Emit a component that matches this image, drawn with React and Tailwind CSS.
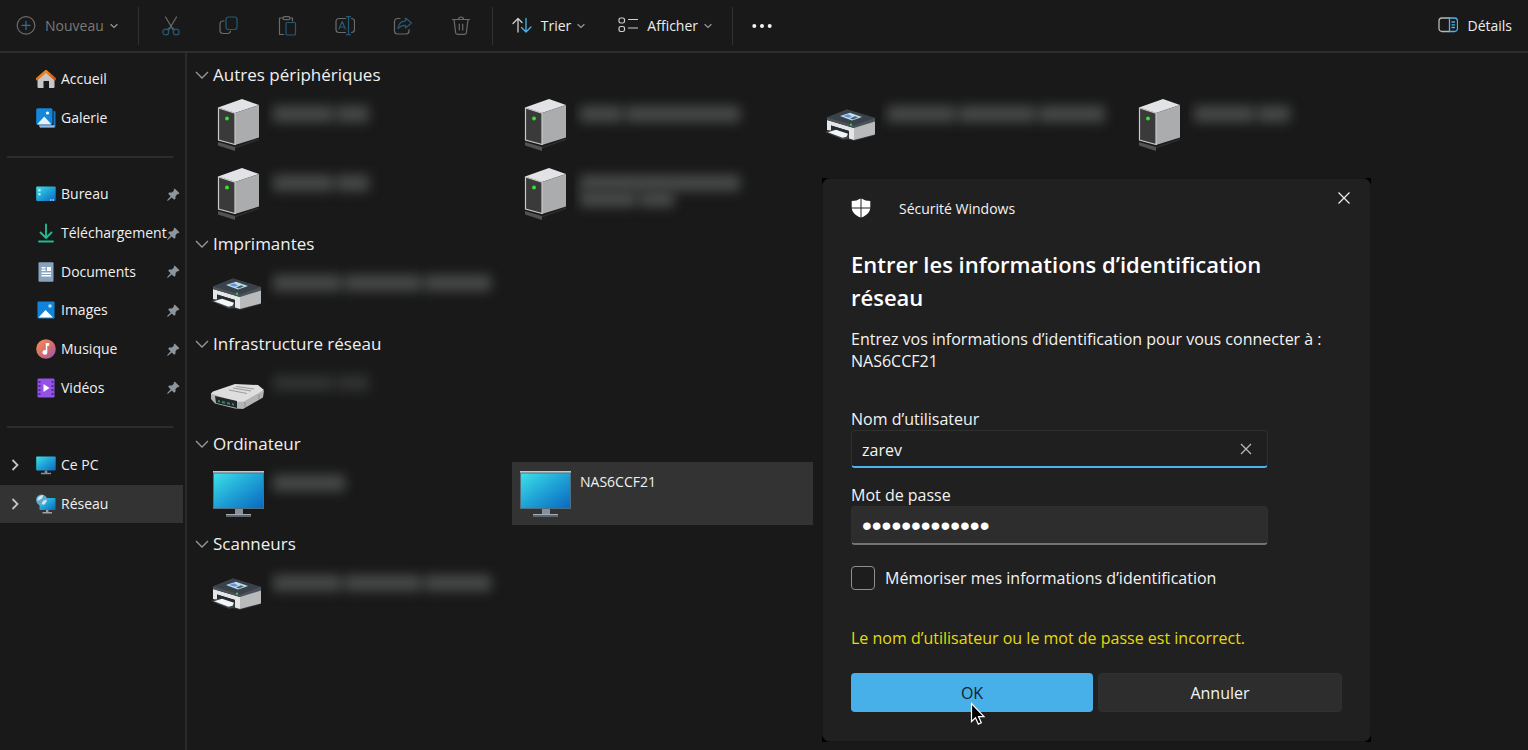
import React, { useState } from 'react';

const places = [
  { name: 'Bureau', icon: DesktopIcon },
  { name: 'Téléchargement', icon: DownloadIcon },
  { name: 'Documents', icon: DocumentIcon },
  { name: 'Images', icon: PictureIcon },
  { name: 'Musique', icon: MusicIcon },
  { name: 'Vidéos', icon: VideoIcon },
];

// Hidden names are drawn as smudges: one list of word widths per line
const groups = [
  {
    title: 'Autres périphériques',
    items: [
      { icon: ServerIcon, smudge: [[60, 32]] },
      { icon: ServerIcon, smudge: [[42, 114]] },
      { icon: PrinterIcon, smudge: [[68, 76, 66]] },
      { icon: ServerIcon, smudge: [[60, 32]] },
      { icon: ServerIcon, smudge: [[60, 32]] },
      { icon: ServerIcon, smudge: [[160], [56, 34]] },
    ],
  },
  { title: 'Imprimantes', items: [{ icon: PrinterIcon, smudge: [[68, 76, 66]] }] },
  { title: 'Infrastructure réseau', items: [{ icon: RouterIcon, smudge: [[60, 32]], faint: true }] },
  { title: 'Ordinateur', items: [{ icon: MonitorIcon, smudge: [[72]] }, { icon: MonitorIcon, name: 'NAS6CCF21', selected: true }] },
  { title: 'Scanneurs', items: [{ icon: PrinterIcon, smudge: [[68, 76, 66]] }] },
];

function Chevron({ className }) {
  return (
    <svg className={className} viewBox="0 0 14 8" fill="none" stroke="currentColor" strokeWidth="1.3">
      <path d="M1 1l6 6 6-6" />
    </svg>
  );
}

function SmallChevron() {
  return (
    <svg className="w-2 h-2 -ml-[3px] text-[#9a9a9a]" viewBox="0 0 8 8" fill="none" stroke="currentColor" strokeWidth="1.2">
      <path d="M0.6 2.2L4 5.4l3.4-3.2" />
    </svg>
  );
}

function ToolIcon({ children }) {
  return (
    <svg className="w-5 h-5" viewBox="0 0 20 20" fill="none" stroke="#6b6b6b" strokeWidth="1.2" strokeLinecap="round" strokeLinejoin="round">
      {children}
    </svg>
  );
}

function CutIcon() {
  return (
    <ToolIcon>
      <path d="M4.5 1l7.6 12.6M15.5 1L7.9 13.6" />
      <g stroke="#255a77">
        <circle cx="4.8" cy="16" r="2.9" />
        <circle cx="15.2" cy="16" r="2.9" />
        <path d="M6.6 13.6l1.2-1.8M13.4 13.6l-1.2-1.8" />
      </g>
    </ToolIcon>
  );
}

function CopyIcon() {
  return (
    <ToolIcon>
      <path d="M5 5H4a3 3 0 00-3 3v6.500a3 3 0 003 3h4.500a3 3 0 003-2.300" />
      <rect x="7" y="1" width="11" height="12.500" rx="2.500" stroke="#255a77" />
    </ToolIcon>
  );
}

function PasteIcon() {
  return (
    <ToolIcon>
      <path d="M6 2H2.500v16.500h4M13 2h2.500v3" />
      <rect x="6" y="0.700" width="7" height="3" rx="1.500" />
      <rect x="9" y="6.500" width="9.500" height="12.500" rx="1" stroke="#255a77" />
    </ToolIcon>
  );
}

function RenameIcon() {
  return (
    <ToolIcon>
      <path d="M10.500 2.500H4a3 3 0 00-3 3v8a3 3 0 003 3h6.500M16.500 2.500a3 3 0 013 3v8a3 3 0 01-3 3" />
      <g stroke="#255a77">
        <path d="M13.500 1v17.500M11.500 0.700h4M11.500 18.700h4" />
        <path d="M4 13L7.200 5.500l3.200 7.500M5 11h4.400" />
      </g>
    </ToolIcon>
  );
}

function ShareIcon() {
  return (
    <ToolIcon>
      <path d="M7 2.500H4.500a3 3 0 00-3 3V15a3 3 0 003 3H13a3 3 0 003-3v-1.500" />
      <path stroke="#255a77" d="M12.500 2l6 5-6 5V9.300c-3.600-.2-5.500.9-7.500 3.200.4-4 2.800-7.300 7.500-7.700z" />
    </ToolIcon>
  );
}

function DeleteIcon() {
  return (
    <ToolIcon>
      <path d="M1.500 3.500h17M3 3.500l1.600 13a2 2 0 002 1.800h6.800a2 2 0 002-1.800L17 3.500M7.500 3.500a2.500 2.500 0 015 0M8.300 8v6M11.700 8v6" />
    </ToolIcon>
  );
}

function SortIcon() {
  return (
    <svg className="w-5 h-5" viewBox="0 0 20 20" fill="none" strokeWidth="1.3" strokeLinecap="round" strokeLinejoin="round">
      <path stroke="#d0d0d0" d="M6 16V2.500M1 7.500l5-5 4 4" />
      <path stroke="#4cb4ec" d="M14 2.500V16M9.500 11.500l4.500 4.500 5-5" />
    </svg>
  );
}

function ViewIcon() {
  return (
    <svg className="w-5 h-5" viewBox="0 0 20 20" fill="none" stroke="#d0d0d0" strokeWidth="1.2" strokeLinecap="round">
      <rect x="1" y="2" width="5.500" height="5" rx="1.800" />
      <rect x="1" y="10.500" width="5.500" height="5" rx="1.800" />
      <path d="M10.500 3.500h9M10.500 12h9" />
    </svg>
  );
}

function DetailsIcon() {
  return (
    <svg className="w-5 h-5" viewBox="0 0 20 20" fill="none" strokeWidth="1.3" strokeLinecap="round">
      <path stroke="#b8b8b8" d="M11.500 2H4a3 3 0 00-3 3v7.500a3 3 0 003 3h7.500" />
      <path stroke="#4cb4ec" d="M11.500 2h5a3 3 0 013 3v7.500a3 3 0 01-3 3h-5zM14 6h2.500M14 8.800h2.500M14 11.500h2.500" />
    </svg>
  );
}

function HomeIcon() {
  return (
    <svg className="w-5 h-5" viewBox="0 0 20 20">
      <defs>
        <linearGradient id="roof" x1="0" y1="0" x2="1" y2="1">
          <stop offset="0" stopColor="#ffa01e" />
          <stop offset="1" stopColor="#cf4a0a" />
        </linearGradient>
      </defs>
      <path d="M1.500 8.500L10 1.800l8.500 6.700v9.500a1 1 0 01-1 1h-4.500v-7H7.500v7H2.500a1 1 0 01-1-1z" fill="#c6c6c6" />
      <path d="M1 10L10 2.300 19 10" fill="none" stroke="url(#roof)" strokeWidth="2.600" strokeLinecap="round" strokeLinejoin="round" />
    </svg>
  );
}

function GalleryIcon() {
  return (
    <svg className="w-5 h-5" viewBox="0 0 20 20">
      <path d="M3 17.500h14.500V3h1a1 1 0 011 1v14.500a1 1 0 01-1 1H4z" fill="#1c74c4" />
      <path d="M3 17.300h15.500v2.200H4z" fill="#8dbcec" />
      <rect x="0.200" y="0.300" width="16.300" height="16.300" rx="1.500" fill="#1487dc" />
      <path d="M1 16.500l7.300-8 7.200 8z" fill="#e4f2fd" />
      <circle cx="11.500" cy="5" r="1.600" fill="#fff" />
    </svg>
  );
}

function DesktopIcon() {
  return (
    <svg className="w-5 h-5" viewBox="0 0 20 20">
      <rect x="0.200" y="2.500" width="19.500" height="14.500" rx="1" fill="url(#screen)" />
      <path d="M2.500 5.300h2v2h-2zM2.500 9.300h2v2h-2zM14 15.500h1.500v1H14zM16.500 15.500H18v1h-1.500z" fill="#e8fbff" />
    </svg>
  );
}

function DownloadIcon() {
  return (
    <svg className="w-5 h-5" viewBox="0 0 20 20" fill="none" stroke="#22b892" strokeWidth="1.900" strokeLinecap="round" strokeLinejoin="round">
      <path d="M10 1.500V15M4.500 9.500L10 15l5.500-5.500M3 18.500h14" />
    </svg>
  );
}

function DocumentIcon() {
  return (
    <svg className="w-5 h-5" viewBox="0 0 20 20">
      <rect x="2.500" y="0.300" width="15" height="19.400" rx="1" fill="#8aa3bd" />
      <path d="M5.500 5h4v1.400h-4zM5.500 7.500h4v1.400h-4zM11 5h4v4h-4zM5.500 10.500H15v1.400H5.500zM5.500 13H15v1.400H5.500z" fill="#fff" />
    </svg>
  );
}

function PictureIcon() {
  return (
    <svg className="w-5 h-5" viewBox="0 0 20 20">
      <rect x="1.500" y="1.500" width="17" height="17" rx="1" fill="#1283da" />
      <path d="M2.500 17.500l7-7.500 7.500 7.500z" fill="#fff" />
      <circle cx="14" cy="6" r="1.700" fill="#bfe1fb" />
    </svg>
  );
}

function MusicIcon() {
  return (
    <svg className="w-5 h-5" viewBox="0 0 20 20">
      <defs>
        <linearGradient id="disc" x1="0.100" y1="0.100" x2="0.900" y2="0.900">
          <stop offset="0" stopColor="#f08a54" />
          <stop offset="0.600" stopColor="#cf6a74" />
          <stop offset="1" stopColor="#a35aa8" />
        </linearGradient>
      </defs>
      <circle cx="10" cy="10" r="9.800" fill="url(#disc)" />
      <path d="M9.800 4h3.400v2.800h-1.900v6.700a2.400 2.300 0 11-1.500-2.200z" fill="#fff" />
    </svg>
  );
}

function VideoIcon() {
  return (
    <svg className="w-5 h-5" viewBox="0 0 20 20">
      <rect x="1.500" y="0.500" width="17" height="19" rx="1.200" fill="#9452e8" />
      <path d="M2.500 3h2v2h-2zM2.500 6.900h2v2h-2zM2.500 10.900h2v2h-2zM2.500 14.900h2v2h-2zM15.500 3h2v2h-2zM15.500 6.900h2v2h-2zM15.500 10.900h2v2h-2zM15.500 14.900h2v2h-2z" fill="#54269c" />
      <path d="M7.500 6l6 4-6 4z" fill="#fff" />
    </svg>
  );
}

function PcIcon() {
  return (
    <svg className="w-5 h-5" viewBox="0 0 20 20">
      <rect x="0.200" y="1.500" width="19.500" height="14" rx="0.800" fill="url(#screen)" />
      <path d="M8.700 15.500h2.600v2.300h3.700v1.400H5v-1.400h3.700z" fill="#84909a" />
    </svg>
  );
}

function NetworkIcon() {
  return (
    <svg className="w-5 h-5" viewBox="0 0 20 20">
      <rect x="3.500" y="4" width="16" height="12" rx="0.800" fill="url(#screen)" />
      <path d="M10 16h2.400v2h3.600v1.500H6.500V18H10z" fill="#98a4ad" />
      <circle cx="5.600" cy="6" r="5.500" fill="#5aa9d0" />
      <path d="M2 3.500c2-2 4-2.500 5.500-2.200L6 4.500 3.500 6 1 6.800zM7 7l3-1.500.8 1.800L8 10.800 5.500 10z" fill="#cfe9f4" />
    </svg>
  );
}

function PinIcon() {
  return (
    <svg className="w-[13px] h-[13px] shrink-0" viewBox="0 0 14 14" fill="#8b969e">
      <path d="M8.300 0.600l5.100 5-1.200 1.200-1.200-.1-1.800 2.200-.1 2.800-1.400 1-2.600-2.600L1 13.700H0.300V13l3.600-4.100L1.300 6.300l1-1.400 2.900-.1 2.200-1.800-.2-1.200z" />
    </svg>
  );
}

function ServerIcon() {
  return (
    <svg className="w-14 h-14" viewBox="0 0 56 56">
      <path d="M7 45l17 5v4L7 48.500z" fill="#525252" />
      <path d="M24 50L48 41.500V43l-24 8.500z" fill="#2e2e2e" />
      <path d="M7 10.500L31 2l17 6-24 8z" fill="#e2e3e6" />
      <path d="M24 16L48 8v32.500L24 48z" fill="#abacae" />
      <path d="M7.500 11L24 16.300V47.500L7.500 43z" fill="#3a3a3a" stroke="#c9c9c9" strokeWidth="1.200" />
      <circle cx="16" cy="21.500" r="1.900" fill="#35e22f" />
    </svg>
  );
}

function PrinterIcon() {
  return (
    <svg className="w-14 h-14" viewBox="0 0 56 56">
      <g transform="translate(-1 12)">
        <path d="M3 19l27 11.500L50 25v1.500L30 32l-8-2z" fill="#2d3438" />
        <path d="M3 11l27 8v12l-5-1.500V22L7 16.500V22l-4-1z" fill="#e4e5e6" />
        <path d="M7 16.500L25 22v6L7 22z" fill="#262c30" />
        <path d="M30 18l21-6.500v14L30 31z" fill="#b9babc" />
        <path d="M3 8.500L23 0.500 51 9v3.500L30 19 3 11z" fill="#4b5359" />
        <path d="M3 8.500L23 0.500 51 9 30 16.500z" fill="#39424a" />
        <path d="M16 7l10-3.200L38 8l-10 3.500z" fill="#c3daf2" />
        <path d="M19 7l5-1.800 4 2.300-3 1.300z" fill="#5c97dc" />
        <path d="M26 9.500l5-2.200 3 .9-5 2.200z" fill="#3f6a5c" />
        <circle cx="27" cy="15.700" r="1.100" fill="#3fd04a" />
        <path d="M1 23l8-2.500L25 26.500l-1 3.500-5 .8z" fill="#3d464c" />
        <path d="M4 23.300l8-2.500 12 4-1.500 3-4 1z" fill="#f5f6f7" />
      </g>
    </svg>
  );
}

function RouterIcon() {
  return (
    <svg className="w-14 h-14" viewBox="0 0 56 56">
      <g transform="translate(0 -1)">
        <path d="M0 28v6l4 4.500 20 5 8 .5 20-11.500 1-7z" fill="#b4b4b4" />
        <path d="M0 28.500l2-2L24 19l23 1 6 5L33 36.500l-7 .5z" fill="#dedede" />
        <path d="M4 31l22 5v7L5 38z" fill="#20262c" />
        <path d="M7 35l2 .5v2l-2-.5zM11 36l3 .7v2l-3-.7zM16 37l3 .7v2l-3-.7zM21 38l2 .7v2l-2-.7z" fill="#2f8d5c" />
        <path d="M22 23l18 3M25 21.500l18 2.500M18 25l18 3.500" stroke="#9c9c9c" strokeWidth="1.200" />
        <path d="M34 37v5M48 29.500v5" stroke="#8c8c8c" />
      </g>
    </svg>
  );
}

function MonitorIcon() {
  return (
    <svg className="w-14 h-14" viewBox="0 0 56 56">
      <path d="M2 5h51v38H2z" fill="#4f6f80" />
      <path d="M2 5h51v1.500H2z" fill="#c3c9cd" />
      <path d="M3 7.500h49V42H3z" fill="url(#screen)" />
      <path d="M24 43h8v5h-8z" fill="#87919b" />
      <path d="M15 48h25v3H15z" fill="#5d666e" />
      <path d="M15 48h25v1H15z" fill="#a5adb4" />
    </svg>
  );
}

function Smudge({ lines, faint }) {
  return (
    <div className={`flex flex-col w-[240px] overflow-hidden pl-[6px] pt-[9px] ${faint ? 'opacity-50' : ''}`} aria-hidden="true">
      {lines.map((words, i) => (
        <div key={i} className="flex gap-1 h-4 pt-1 blur-[6px]">
          {words.map((width, j) => (
            <span key={j} className="h-4 bg-[#484a4a]" style={{ width }} />
          ))}
        </div>
      ))}
    </div>
  );
}

function SideRow({ icon: Icon, name, pinned, expandable, selected }) {
  return (
    <a
      href="#"
      className={`flex flex-1 items-center pl-[10px] pr-[3px] mr-[2px] text-sm text-[#f0f0f0] ${selected ? 'bg-[#333333]' : ''}`}
    >
      <span className="w-[26px] shrink-0">
        {expandable && (
          <svg className="w-[10px] h-3" viewBox="0 0 10 12" fill="none" stroke="#c4c4c4" strokeWidth="1.800">
            <path d="M2.500 1l5 5-5 5" />
          </svg>
        )}
      </span>
      <span className="shrink-0"><Icon /></span>
      <span className="ml-[5px] flex-1 min-w-0 whitespace-nowrap">{name}</span>
      {pinned && <PinIcon />}
    </a>
  );
}

function Toolbar() {
  return (
    <header className="flex items-center h-[53px] px-4 border-b-2 border-[#2e2e2e] text-sm text-[#ececec]">
      <button className="flex items-center gap-[9px] text-[#787878]">
        <ToolIcon>
          <circle cx="10" cy="9.400" r="8.800" />
          <path stroke="#2f7296" d="M10 5.400v8M6 9.400h8" />
        </ToolIcon>
        <span>Nouveau</span>
        <SmallChevron />
      </button>
      <div className="w-px h-[38px] bg-[#303030] ml-5 mr-[3px]" />
      {[['Couper', CutIcon], ['Copier', CopyIcon], ['Coller', PasteIcon], ['Renommer', RenameIcon], ['Partager', ShareIcon], ['Supprimer', DeleteIcon]].map(([label, Icon]) => (
        <button key={label} aria-label={label} className="flex justify-center w-[58px]">
          <Icon />
        </button>
      ))}
      <div className="w-px h-[38px] bg-[#303030] ml-[2px] mr-[19px]" />
      <button className="flex items-center gap-[9px]">
        <SortIcon />
        <span>Trier</span>
        <SmallChevron />
      </button>
      <button className="flex items-center gap-[9px] ml-[33px]">
        <ViewIcon />
        <span>Afficher</span>
        <SmallChevron />
      </button>
      <div className="w-px h-[38px] bg-[#303030] ml-5 mr-[19px]" />
      <button aria-label="Plus">
        <svg className="w-5 h-5" viewBox="0 0 20 20" fill="#f2f2f2">
          <circle cx="2.300" cy="10" r="2" />
          <circle cx="10" cy="10" r="2" />
          <circle cx="17.700" cy="10" r="2" />
        </svg>
      </button>
      <button className="flex items-center gap-[9px] ml-auto">
        <DetailsIcon />
        <span>Détails</span>
      </button>
    </header>
  );
}

function CredentialDialog() {
  const [user, setUser] = useState('zarev');
  const [password, setPassword] = useState('motdepasse123');
  const [remember, setRemember] = useState(false);

  return (
    <div className="absolute left-[822px] top-[178px] w-[549px] bg-black">
      <form
        role="dialog"
        aria-labelledby="dialog-title"
        onSubmit={(e) => e.preventDefault()}
        className="rounded-lg border border-[#191919] bg-[#202020] px-7 pb-[29px] text-base leading-[22px] text-[#f3f3f3]"
      >
        <div className="flex items-start h-[69px] pt-[17px]">
          <svg className="w-5 h-5 mt-[2px]" viewBox="0 0 20 20" fill="#fff">
            <path d="M9.500 0.500v9H0.700V3C4 3 7 2.200 9.500 0.500zM10.500 0.500C13 2.200 16 3 19.300 3v6.500h-8.800zM0.800 10.500h8.700v9C4.500 17.500 1.300 14.500 0.800 10.500zM19.200 10.500h-8.700v9c5-2 8.200-5 8.700-9z" />
          </svg>
          <span className="ml-7 mt-[2px] text-sm leading-[22px]">Sécurité Windows</span>
          <button type="button" aria-label="Fermer" className="ml-auto -mr-[14px] -mt-[10px] p-[6px]">
            <svg className="w-3 h-3" viewBox="0 0 12 12" stroke="#f0f0f0" strokeWidth="1.200">
              <path d="M0.500 0.500l11 11M11.500 0.500l-11 11" />
            </svg>
          </button>
        </div>
        <h1 id="dialog-title" className="max-w-[440px] text-[22px] leading-[33px] font-semibold text-white">
          Entrer les informations d’identification réseau
        </h1>
        <p className="mt-[14px]">Entrez vos informations d’identification pour vous connecter à : NAS6CCF21</p>

        <label htmlFor="user" className="block mt-9">Nom d’utilisateur</label>
        <div className="flex items-center w-[417px] h-[38px] rounded border border-[#2f2f2f] border-b-2 border-b-[#4cb4ec] bg-[#1f1f1f]">
          <input
            id="user"
            type="text"
            value={user}
            onChange={(e) => setUser(e.target.value)}
            className="flex-1 min-w-0 h-full pl-[10px] pt-[2px] bg-transparent outline-none"
          />
          <button type="button" aria-label="Effacer" onClick={() => setUser('')} className="px-[15px]">
            <svg className="w-3 h-3" viewBox="0 0 12 12" stroke="#b8b8b8" strokeWidth="1.300">
              <path d="M1 1l10 10M11 1L1 11" />
            </svg>
          </button>
        </div>

        <label htmlFor="password" className="block mt-4">Mot de passe</label>
        <input
          id="password"
          type="password"
          value={password}
          onChange={(e) => setPassword(e.target.value)}
          className="block w-[417px] h-[39px] pl-[10px] pt-[2px] rounded border border-[#2f2f2f] border-b-2 border-b-[#747474] bg-[#2d2d2d] outline-none text-[28px] text-white font-['Liberation_Sans',sans-serif]"
        />

        <div className="flex items-center gap-[10px] mt-[21px]">
          <input
            id="remember"
            type="checkbox"
            checked={remember}
            onChange={(e) => setRemember(e.target.checked)}
            className="appearance-none w-6 h-6 rounded border border-[#8f8f8f] bg-[#1d1d1d] checked:bg-[#48b0e8]"
          />
          <label htmlFor="remember">Mémoriser mes informations d’identification</label>
        </div>

        <p role="alert" className="mt-[37px] text-[#e2dc0c]">Le nom d’utilisateur ou le mot de passe est incorrect.</p>

        <div className="flex gap-[5px] mt-6">
          <button type="submit" className="flex-1 h-[39px] rounded bg-[#48b0e8] text-[#10222e]">OK</button>
          <button type="button" className="flex-1 h-[39px] rounded bg-[#2d2d2d] border border-[#313131]">Annuler</button>
        </div>
      </form>
      <svg className="absolute left-[148px] top-[524px] w-4 h-6" viewBox="0 0 16 24">
        <path d="M1.500 1.500v18l4-3.800 2.800 6.400 3-1.300-2.800-6.200h5.500z" fill="#000" stroke="#fff" strokeWidth="1.200" />
      </svg>
    </div>
  );
}

export default function App() {
  return (
    <div className="relative flex flex-col min-h-screen overflow-hidden bg-[#191919] font-['Open_Sans','Noto_Sans',sans-serif] text-[#f0f0f0]">
      <svg className="absolute w-0 h-0" aria-hidden="true">
        <defs>
          <linearGradient id="screen" x1="0" y1="0" x2="1" y2="1">
            <stop offset="0" stopColor="#3de0e8" />
            <stop offset="0.500" stopColor="#1fa2d6" />
            <stop offset="1" stopColor="#0b68c0" />
          </linearGradient>
        </defs>
      </svg>
      <Toolbar />
      <div className="flex flex-1">
        <nav className="w-[187px] shrink-0 pt-[7px] border-r-2 border-[#2b2b2b]">
          <div className="flex flex-col h-[77px]">
            <SideRow icon={HomeIcon} name="Accueil" />
            <SideRow icon={GalleryIcon} name="Galerie" />
          </div>
          <hr className="mt-[19px] mb-[17px] ml-[7px] mr-3 border-t-2 border-[#2c2c2c]" />
          <div className="flex flex-col h-[232px]">
            {places.map((place) => (
              <SideRow key={place.name} icon={place.icon} name={place.name} pinned />
            ))}
          </div>
          <hr className="mt-[19px] mb-[18px] ml-[7px] mr-3 border-t-2 border-[#2c2c2c]" />
          <div className="flex flex-col h-[77px]">
            <SideRow icon={PcIcon} name="Ce PC" expandable />
            <SideRow icon={NetworkIcon} name="Réseau" expandable selected />
          </div>
        </nav>
        <main className="flex-1 pt-[10px] pl-2">
          {groups.map((group) => (
            <section key={group.title} className="mb-[7px]">
              <h2 className="flex items-center gap-1 h-6 text-[17px]">
                <Chevron className="w-[14px] h-2 text-[#9a9a9a]" />
                {group.title}
              </h2>
              <ul className="grid grid-cols-[repeat(auto-fill,301px)] gap-[6px] pl-[10px] mt-[6px]">
                {group.items.map((item, i) => (
                  <li key={i} className={`flex h-[63px] pl-[6px] ${item.selected ? 'bg-[#333333]' : ''}`}>
                    <div className="flex items-center shrink-0"><item.icon /></div>
                    {item.name ? (
                      <span className="ml-[6px] mt-[10px] text-sm">{item.name}</span>
                    ) : (
                      <Smudge lines={item.smudge} faint={item.faint} />
                    )}
                  </li>
                ))}
              </ul>
            </section>
          ))}
        </main>
      </div>
      <CredentialDialog />
    </div>
  );
}
